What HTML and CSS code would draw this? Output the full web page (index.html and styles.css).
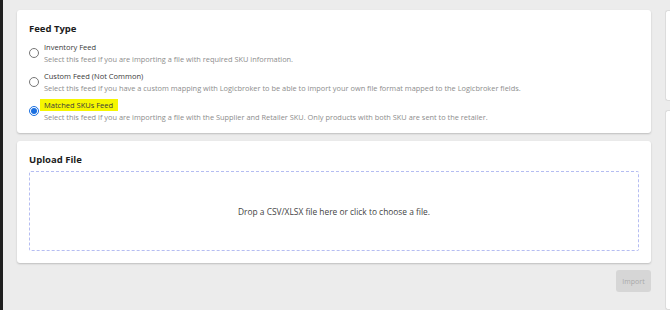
FILE: index.html
```html
<!DOCTYPE html>
<html lang="en">
<head>
    <meta charset="UTF-8">
    <meta name="viewport" content="width=device-width, initial-scale=1.0">
    <title>Import Feed</title>
    <link rel="stylesheet" href="styles.css">
</head>
<body>
    <div class="edge"></div>

    <main class="content">
        <section class="card">
            <h2 class="card-title">Feed Type</h2>

            <label class="option">
                <input type="radio" name="feed" value="inventory">
                <span class="option-text">
                    <span class="option-label">Inventory Feed</span>
                    <span class="option-desc">Select this feed if you are importing a file with required SKU information.</span>
                </span>
            </label>

            <label class="option">
                <input type="radio" name="feed" value="custom">
                <span class="option-text">
                    <span class="option-label">Custom Feed (Not Common)</span>
                    <span class="option-desc">Select this feed if you have a custom mapping with Logicbroker to be able to import your own file format mapped to the Logicbroker fields.</span>
                </span>
            </label>

            <label class="option">
                <input type="radio" name="feed" value="matched" checked>
                <span class="option-text">
                    <span class="option-label"><mark class="highlight">Matched SKUs Feed</mark></span>
                    <span class="option-desc">Select this feed if you are importing a file with the Supplier and Retailer SKU. Only products with both SKU are sent to the retailer.</span>
                </span>
            </label>
        </section>

        <section class="card card-upload">
            <h2 class="card-title">Upload File</h2>
            <div class="dropzone">Drop a CSV/XLSX file here or click to choose a file.</div>
        </section>

        <div class="actions">
            <button class="btn" disabled>Import</button>
        </div>
    </main>

    <aside class="side">
        <div class="side-card side-card-top"></div>
        <div class="side-card"></div>
    </aside>
</body>
</html>
```

FILE: styles.css
```css
* {
    box-sizing: border-box;
}

body {
    margin: 0;
    height: 310px;
    overflow: hidden;
    display: flex;
    background-color: #ececec;
    font-family: "Open Sans", Arial, sans-serif;
    color: #333;
}

.edge {
    width: 3px;
    flex-shrink: 0;
    background-color: #1f1f1f;
}

.content {
    width: 648px;
    flex-shrink: 0;
    padding: 10px 0 0 14px;
}

.card {
    background-color: #fff;
    border-radius: 3px;
    box-shadow: 0 1px 2px rgba(0,0,0,0.2);
    padding: 13px 12px 12px;
    margin-bottom: 8px;
}

.card-title {
    margin: 0;
    font-size: 9.5px;
    font-weight: 700;
    color: #1d1d1d;
    line-height: 12px;
}

.card:first-child {
    height: 123px;
}

.card:first-child .card-title {
    margin-bottom: 3px;
}

.option {
    display: flex;
    align-items: center;
    gap: 5px;
    height: 29px;
    cursor: pointer;
}

.option input {
    margin: 0;
    width: 10px;
    height: 10px;
    accent-color: #1a6fe0;
}

.option-text {
    display: flex;
    flex-direction: column;
    gap: 1px;
}

.option-label {
    font-size: 7.5px;
    line-height: 11px;
    color: #3a3a3a;
}

.option-desc {
    font-size: 7.4px;
    line-height: 10px;
    color: #8d8d8d;
}

.highlight {
    background-color: #f6f600;
    color: #3a3a3a;
    padding: 1px 5px 1px 4px;
    margin-left: -4px;
}

.card-upload {
    margin-bottom: 7px;
}

.dropzone {
    margin-top: 5px;
    height: 80px;
    border: 1px dashed #b5bdf2;
    border-radius: 2px;
    display: flex;
    align-items: center;
    justify-content: center;
    font-size: 8.4px;
    color: #444;
}

.actions {
    display: flex;
    justify-content: flex-end;
}

.btn {
    width: 35px;
    height: 22px;
    border: none;
    border-radius: 3px;
    background-color: #d6d6d6;
    color: #a9a9a9;
    font-family: inherit;
    font-size: 7px;
    padding: 0;
}

.side {
    flex: 1;
    padding: 10px 0 0 14px;
}

.side-card {
    background-color: #fff;
    border: 1px solid #dcdcdc;
    border-right: none;
    border-radius: 3px 0 0 3px;
    height: 200px;
}

.side-card-top {
    height: 91px;
    margin-bottom: 9px;
}
```
